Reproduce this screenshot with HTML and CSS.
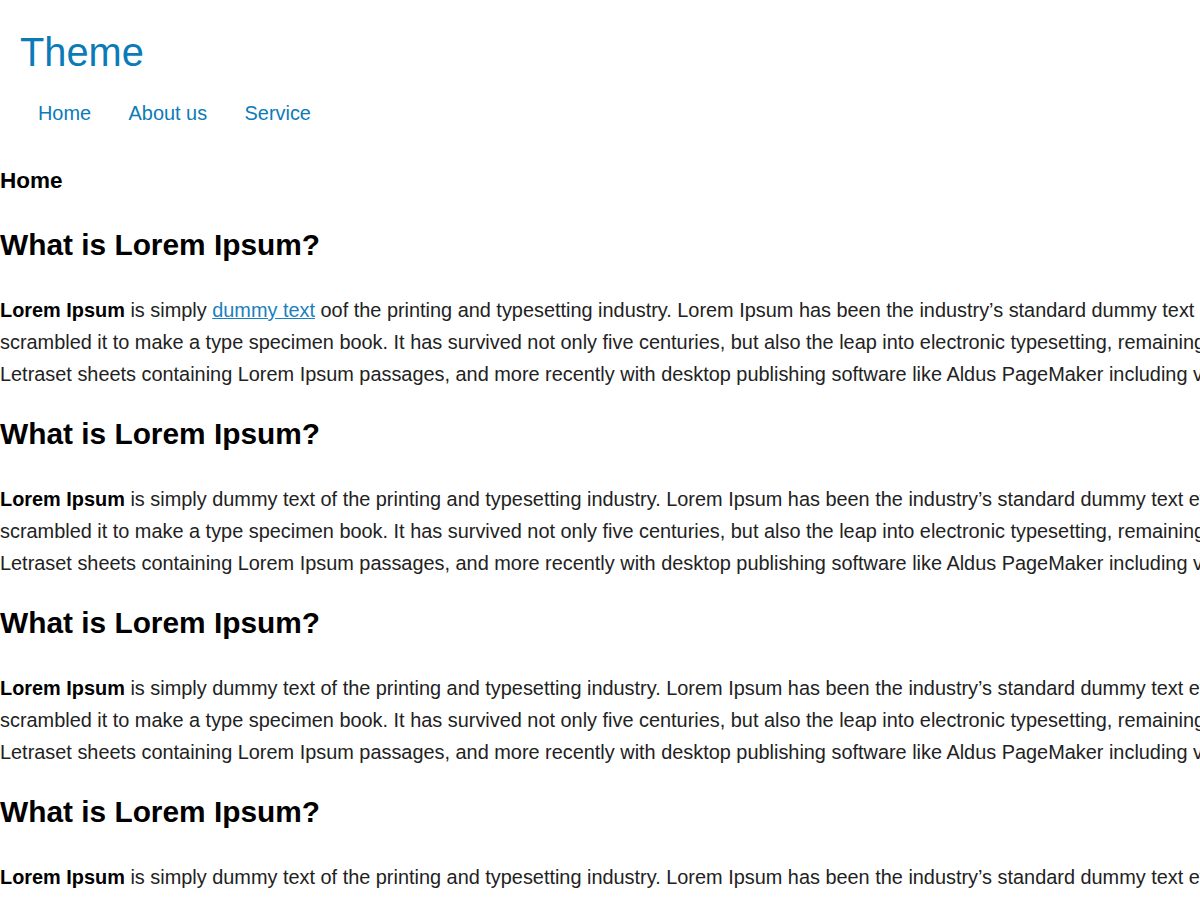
FILE: index.html
```html
<!DOCTYPE html>
<html lang="en">
<head>
<meta charset="utf-8">
<title>Theme</title>
<link rel="stylesheet" href="styles.css">
</head>
<body>
<header class="site-header">
  <div class="site-title">Theme</div>
  <nav class="site-nav">
    <a href="#" class="nav-link">Home</a>
    <a href="#" class="nav-link">About us</a>
    <a href="#" class="nav-link">Service</a>
  </nav>
</header>
<main class="content">
  <h1 class="page-title">Home</h1>
  <h2 class="section-title">What is Lorem Ipsum?</h2>
  <p class="section-text"><strong>Lorem Ipsum</strong> is simply <a href="#" class="text-link">dummy text</a> oof the printing and typesetting industry. Lorem Ipsum has been the industry’s standard dummy text ever since the 1500s, when an unknown printer took a galley of type and scrambled it to make a type specimen book. It has survived not only five centuries, but also the leap into electronic typesetting, remaining essentially unchanged. It was popularised in the 1960s with the release of Letraset sheets containing Lorem Ipsum passages, and more recently with desktop publishing software like Aldus PageMaker including versions of Lorem Ipsum.</p>
  <h2 class="section-title">What is Lorem Ipsum?</h2>
  <p class="section-text"><strong>Lorem Ipsum</strong> is simply dummy text of the printing and typesetting industry. Lorem Ipsum has been the industry’s standard dummy text ever since the 1500s, when an unknown printer took a galley of type and scrambled it to make a type specimen book. It has survived not only five centuries, but also the leap into electronic typesetting, remaining essentially unchanged. It was popularised in the 1960s with the release of Letraset sheets containing Lorem Ipsum passages, and more recently with desktop publishing software like Aldus PageMaker including versions of Lorem Ipsum.</p>
  <h2 class="section-title">What is Lorem Ipsum?</h2>
  <p class="section-text"><strong>Lorem Ipsum</strong> is simply dummy text of the printing and typesetting industry. Lorem Ipsum has been the industry’s standard dummy text ever since the 1500s, when an unknown printer took a galley of type and scrambled it to make a type specimen book. It has survived not only five centuries, but also the leap into electronic typesetting, remaining essentially unchanged. It was popularised in the 1960s with the release of Letraset sheets containing Lorem Ipsum passages, and more recently with desktop publishing software like Aldus PageMaker including versions of Lorem Ipsum.</p>
  <h2 class="section-title">What is Lorem Ipsum?</h2>
  <p class="section-text"><strong>Lorem Ipsum</strong> is simply dummy text of the printing and typesetting industry. Lorem Ipsum has been the industry’s standard dummy text ever since the 1500s, when an unknown printer took a galley of type and scrambled it to make a type specimen book. It has survived not only five centuries, but also the leap into electronic typesetting, remaining essentially unchanged. It was popularised in the 1960s with the release of Letraset sheets containing Lorem Ipsum passages, and more recently with desktop publishing software like Aldus PageMaker including versions of Lorem Ipsum.</p>
</main>
</body>
</html>
```
FILE: styles.css
```css
html {
  overflow: hidden;
}
body {
  margin: 0;
  font-family: "Liberation Sans", Arial, sans-serif;
  font-size: 19.9px;
  line-height: 1.6;
  color: #222;
  background: #fff;
}
.site-header {
  padding: 28px 0 0 20px;
}
.site-title {
  font-size: 39.8px;
  line-height: 48px;
  color: #0b7bb8;
}
.site-nav {
  display: flex;
  gap: 37.5px;
  margin-top: 21px;
  padding-left: 18px;
}
.nav-link {
  color: #0b7bb8;
  text-decoration: none;
  line-height: 32px;
}
.content {
  width: 1920px;
  padding-top: 34px;
}
.page-title {
  margin: 0 0 22px;
  font-size: 22.5px;
  line-height: 36px;
  font-weight: bold;
  color: #000;
}
.section-title {
  margin: 0 0 25px;
  font-size: 29.85px;
  line-height: 48px;
  font-weight: bold;
  color: #000;
}
.section-text {
  margin: 0 0 20px;
  line-height: 32px;
}
.section-text strong {
  color: #000;
}
.text-link {
  color: #1a80bf;
}
```
